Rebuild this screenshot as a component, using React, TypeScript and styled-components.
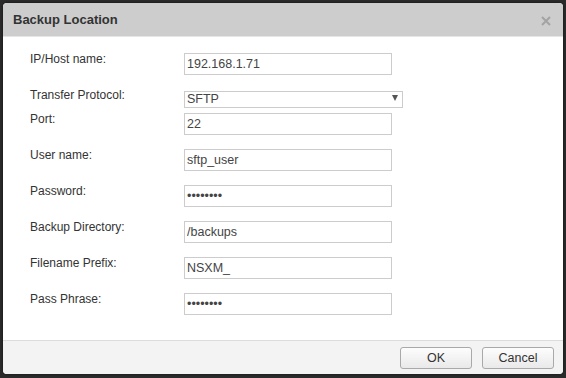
import styled, { createGlobalStyle } from 'styled-components';

const GlobalStyle = createGlobalStyle`
  html, body {
    margin: 0;
    padding: 0;
    background: #2b2b2b;
    font-family: 'Liberation Sans', Arial, sans-serif;
  }
`;

const fields = [
  { label: 'IP/Host name:', value: '192.168.1.71' },
  { label: 'Transfer Protocol:', value: 'SFTP', select: true },
  { label: 'Port:', value: '22' },
  { label: 'User name:', value: 'sftp_user' },
  { label: 'Password:', value: 'secret12', password: true },
  { label: 'Backup Directory:', value: '/backups' },
  { label: 'Filename Prefix:', value: 'NSXM_' },
  { label: 'Pass Phrase:', value: 'phrase12', password: true, focus: true },
];

const App = () => {
  return (
    <Page>
      <GlobalStyle />
      <Dialog>
        <Header>
          <Title>Backup Location</Title>
          <CloseButton aria-label='close'>
            <svg width='10' height='10' viewBox='0 0 10 10'>
              <path d='M1 1 L9 9 M9 1 L1 9' stroke='#a3a3a3' strokeWidth='2' />
            </svg>
          </CloseButton>
        </Header>
        <Body>
          {fields.map(f => (
            <Row key={f.label} $select={!!f.select}>
              <Label>{f.label}</Label>
              {f.select ? (
                <SelectWrap>
                  <Select defaultValue={f.value}>
                    <option>SFTP</option>
                    <option>FTP</option>
                  </Select>
                  <Arrow />
                </SelectWrap>
              ) : (
                <Input
                  type={f.password ? 'password' : 'text'}
                  defaultValue={f.value}
                  autoFocus={f.focus}
                />
              )}
            </Row>
          ))}
        </Body>
        <Footer>
          <Button>OK</Button>
          <Button>Cancel</Button>
        </Footer>
      </Dialog>
    </Page>
  );
};

export default App;

const Page = styled.div`
  width: 566px;
  height: 378px;
  padding: 3px 0 0 3px;
  box-sizing: border-box;
`;

const Dialog = styled.div`
  width: 560px;
  height: 371px;
  border-radius: 4px;
  overflow: hidden;
  background: #fff;
  display: flex;
  flex-direction: column;
  box-shadow: 0 0 3px rgba(0, 0, 0, 0.6);
`;

const Header = styled.div`
  height: 34px;
  box-sizing: border-box;
  flex: none;
  background: #cdcdcd;
  border-bottom: 1px solid #e6e6e6;
  display: flex;
  align-items: center;
  justify-content: space-between;
  padding: 0 12px 0 10px;
`;

const Title = styled.h1`
  margin: 0;
  font-size: 13px;
  font-weight: bold;
  color: #333;
`;

const CloseButton = styled.span`
  display: flex;
  margin-top: 3px;
`;

const Body = styled.div`
  flex: 1;
  padding: 16px 0 0 27px;
`;

const Row = styled.div<{ $select: boolean }>`
  display: flex;
  align-items: flex-start;
  height: ${({ $select }) => ($select ? '16px' : '22px')};
  margin-bottom: ${({ $select }) => ($select ? '8px' : '14px')};
`;

const Label = styled.label`
  width: 154px;
  font-size: 12px;
  line-height: 13px;
  color: #333;
`;

const Input = styled.input`
  width: 208px;
  height: 22px;
  box-sizing: border-box;
  border: 1px solid #ccc;
  padding: 0 2px;
  margin: 0;
  font-family: 'Liberation Sans', Arial, sans-serif;
  font-size: 12.5px;
  color: #444;
  outline: none;
  caret-color: #222;
`;

const SelectWrap = styled.div`
  position: relative;
  width: 219px;
  height: 17px;
`;

const Select = styled.select`
  appearance: none;
  width: 100%;
  height: 17px;
  box-sizing: border-box;
  border: 1px solid #ccc;
  border-radius: 0;
  background: #fff;
  padding: 0 2px;
  margin: 0;
  font-family: 'Liberation Sans', Arial, sans-serif;
  font-size: 12.5px;
  color: #444;
  outline: none;
`;

const Arrow = styled.span`
  position: absolute;
  right: 5px;
  top: 6px;
  width: 0;
  height: 0;
  border-left: 3.5px solid transparent;
  border-right: 3.5px solid transparent;
  border-top: 6px solid #555;
  pointer-events: none;
`;

const Footer = styled.div`
  height: 34px;
  box-sizing: border-box;
  flex: none;
  border-top: 1px solid #dcdcdc;
  background: #f3f3f3;
  display: flex;
  justify-content: flex-end;
  align-items: flex-start;
  gap: 10px;
  padding: 6px 9px 0 0;
`;

const Button = styled.button`
  width: 72px;
  height: 22px;
  border: 1px solid #a9a9a9;
  border-radius: 3px;
  background: linear-gradient(#fdfdfd, #e9e9e9);
  font-family: 'Liberation Sans', Arial, sans-serif;
  font-size: 12.5px;
  color: #333;
  padding: 0;
`;
